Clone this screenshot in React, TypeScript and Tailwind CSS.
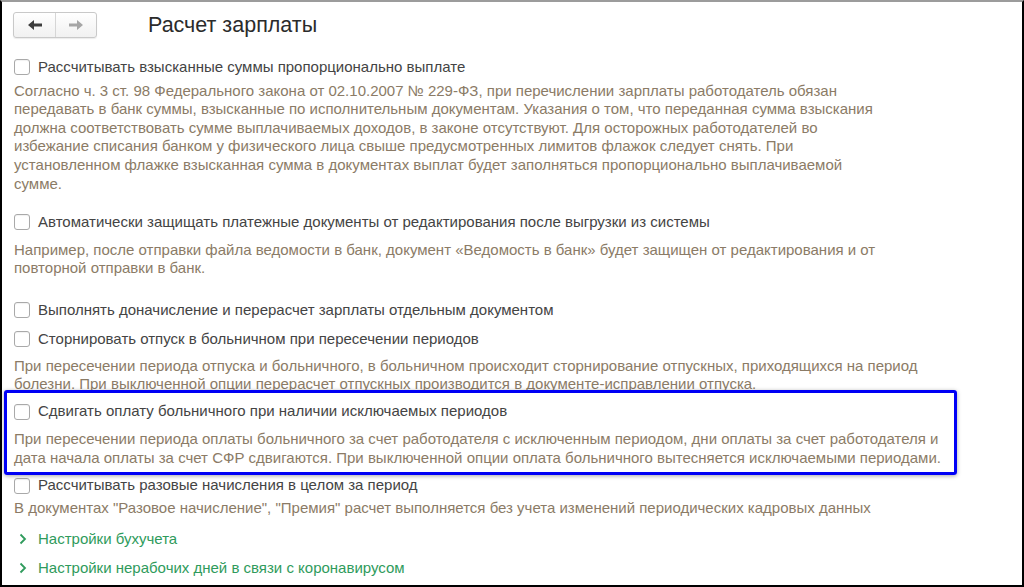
import { ReactNode } from 'react';

function Checkbox() {
  return (
    <span className="w-[16px] h-[16px] shrink-0 rounded-[3px] border border-[#a9a9a9] bg-white shadow-[inset_0_1px_1px_rgba(0,0,0,0.06)]" />
  );
}

function CheckRow({ label, className = '' }: { label: string; className?: string }) {
  return (
    <div className={`flex items-center gap-[8px] h-[20px] ${className}`}>
      <Checkbox />
      <span className="text-[15px] text-[#444444] whitespace-nowrap">{label}</span>
    </div>
  );
}

function Note({ lines, className = '' }: { lines: string[]; className?: string }) {
  return (
    <p className={`text-[15px] leading-[18.6px] text-[#8b7b66] whitespace-nowrap ${className}`}>
      {lines.map((l, i) => (
        <span key={i} className="block">
          {l}
        </span>
      ))}
    </p>
  );
}

function GroupLink({ children, className = '' }: { children: ReactNode; className?: string }) {
  return (
    <div className={`flex items-center h-[20px] gap-[11px] pl-[5px] ${className}`}>
      <svg width="8" height="12" viewBox="0 0 8 12" className="shrink-0">
        <polyline points="1.5,1.5 6,6 1.5,10.5" fill="none" stroke="#2f9b5c" strokeWidth="1.8" />
      </svg>
      <span className="text-[15px] text-[#2f9b5c] whitespace-nowrap">{children}</span>
    </div>
  );
}

function NavButtons() {
  return (
    <div className="flex w-[84px] h-[26px] rounded-[3px] border border-[#c9c9c9] bg-gradient-to-b from-white to-[#f1f1f1] shadow-[0_1px_1px_rgba(0,0,0,0.08)]">
      <div className="w-[42px] flex items-center justify-center border-r border-[#d6d6d6]">
        <svg width="14" height="10" viewBox="0 0 14 10">
          <path d="M0 5 L6 0 L6 3.5 L14 3.5 L14 6.5 L6 6.5 L6 10 Z" fill="#3d3d3d" />
        </svg>
      </div>
      <div className="flex-1 flex items-center justify-center">
        <svg width="14" height="10" viewBox="0 0 14 10">
          <path d="M14 5 L8 0 L8 3.5 L0 3.5 L0 6.5 L8 6.5 L8 10 Z" fill="#a6a6a6" />
        </svg>
      </div>
    </div>
  );
}

export default function App() {
  return (
    <div className="w-[1024px] h-[587px] overflow-hidden bg-white border-2 border-black border-t-[#9c9c9c] font-['Liberation_Sans',Arial,sans-serif]">
      {/* Header */}
      <div className="flex items-center h-[26px] mt-[10px] pl-[11px]">
        <NavButtons />
        <h1 className="ml-[51px] text-[21.5px] text-[#2b2b2b] whitespace-nowrap">Расчет зарплаты</h1>
      </div>

      <div className="pl-[12px]">
        <CheckRow label="Рассчитывать взысканные суммы пропорционально выплате" className="mt-[19px]" />
        <Note
          className="mt-[4.7px]"
          lines={[
            'Согласно ч. 3 ст. 98 Федерального закона от 02.10.2007 № 229-ФЗ, при перечислении зарплаты работодатель обязан',
            'передавать в банк суммы, взысканные по исполнительным документам. Указания о том, что переданная сумма взыскания',
            'должна соответствовать сумме выплачиваемых доходов, в законе отсутствуют. Для осторожных работодателей во',
            'избежание списания банком у физического лица свыше предусмотренных лимитов флажок следует снять. При',
            'установленном флажке взысканная сумма в документах выплат будет заполняться пропорционально выплачиваемой',
            'сумме.',
          ]}
        />

        <CheckRow
          label="Автоматически защищать платежные документы от редактирования после выгрузки из системы"
          className="mt-[18.7px]"
        />
        <Note
          className="mt-[8.7px]"
          lines={[
            'Например, после отправки файла ведомости в банк, документ «Ведомость в банк» будет защищен от редактирования и от',
            'повторной отправки в банк.',
          ]}
        />

        <CheckRow label="Выполнять доначисление и перерасчет зарплаты отдельным документом" className="mt-[22px]" />
        <CheckRow label="Сторнировать отпуск в больничном при пересечении периодов" className="mt-[9px]" />
        <Note
          className="mt-[7.7px]"
          lines={[
            'При пересечении периода отпуска и больничного, в больничном происходит сторнирование отпускных, приходящихся на период',
            'болезни. При выключенной опции перерасчет отпускных производится в документе-исправлении отпуска.',
          ]}
        />

        {/* Highlighted option */}
        <div className="relative mt-[-4px] ml-[-10px] w-[953px] h-[85px] rounded-[3px] border-[3px] border-[#0000f5] shadow-[0_1px_4px_rgba(0,0,0,0.35)] pl-[7px] pt-[9px]">
          <CheckRow label="Сдвигать оплату больничного при наличии исключаемых периодов" />
          <Note
            className="mt-[8.7px]"
            lines={[
              'При пересечении периода оплаты больничного за счет работодателя с исключенным периодом, дни оплаты за счет работодателя и',
              'дата начала оплаты за счет СФР сдвигаются. При выключенной опции оплата больничного вытесняется исключаемыми периодами.',
            ]}
          />
        </div>

        <CheckRow label="Рассчитывать разовые начисления в целом за период" className="mt-[1px]" />
        <Note
          className="mt-[3.7px]"
          lines={['В документах "Разовое начисление", "Премия" расчет выполняется без учета изменений периодических кадровых данных']}
        />

        <GroupLink className="mt-[11px]">Настройки бухучета</GroupLink>
        <GroupLink className="mt-[9px]">Настройки нерабочих дней в связи с коронавирусом</GroupLink>
      </div>
    </div>
  );
}
